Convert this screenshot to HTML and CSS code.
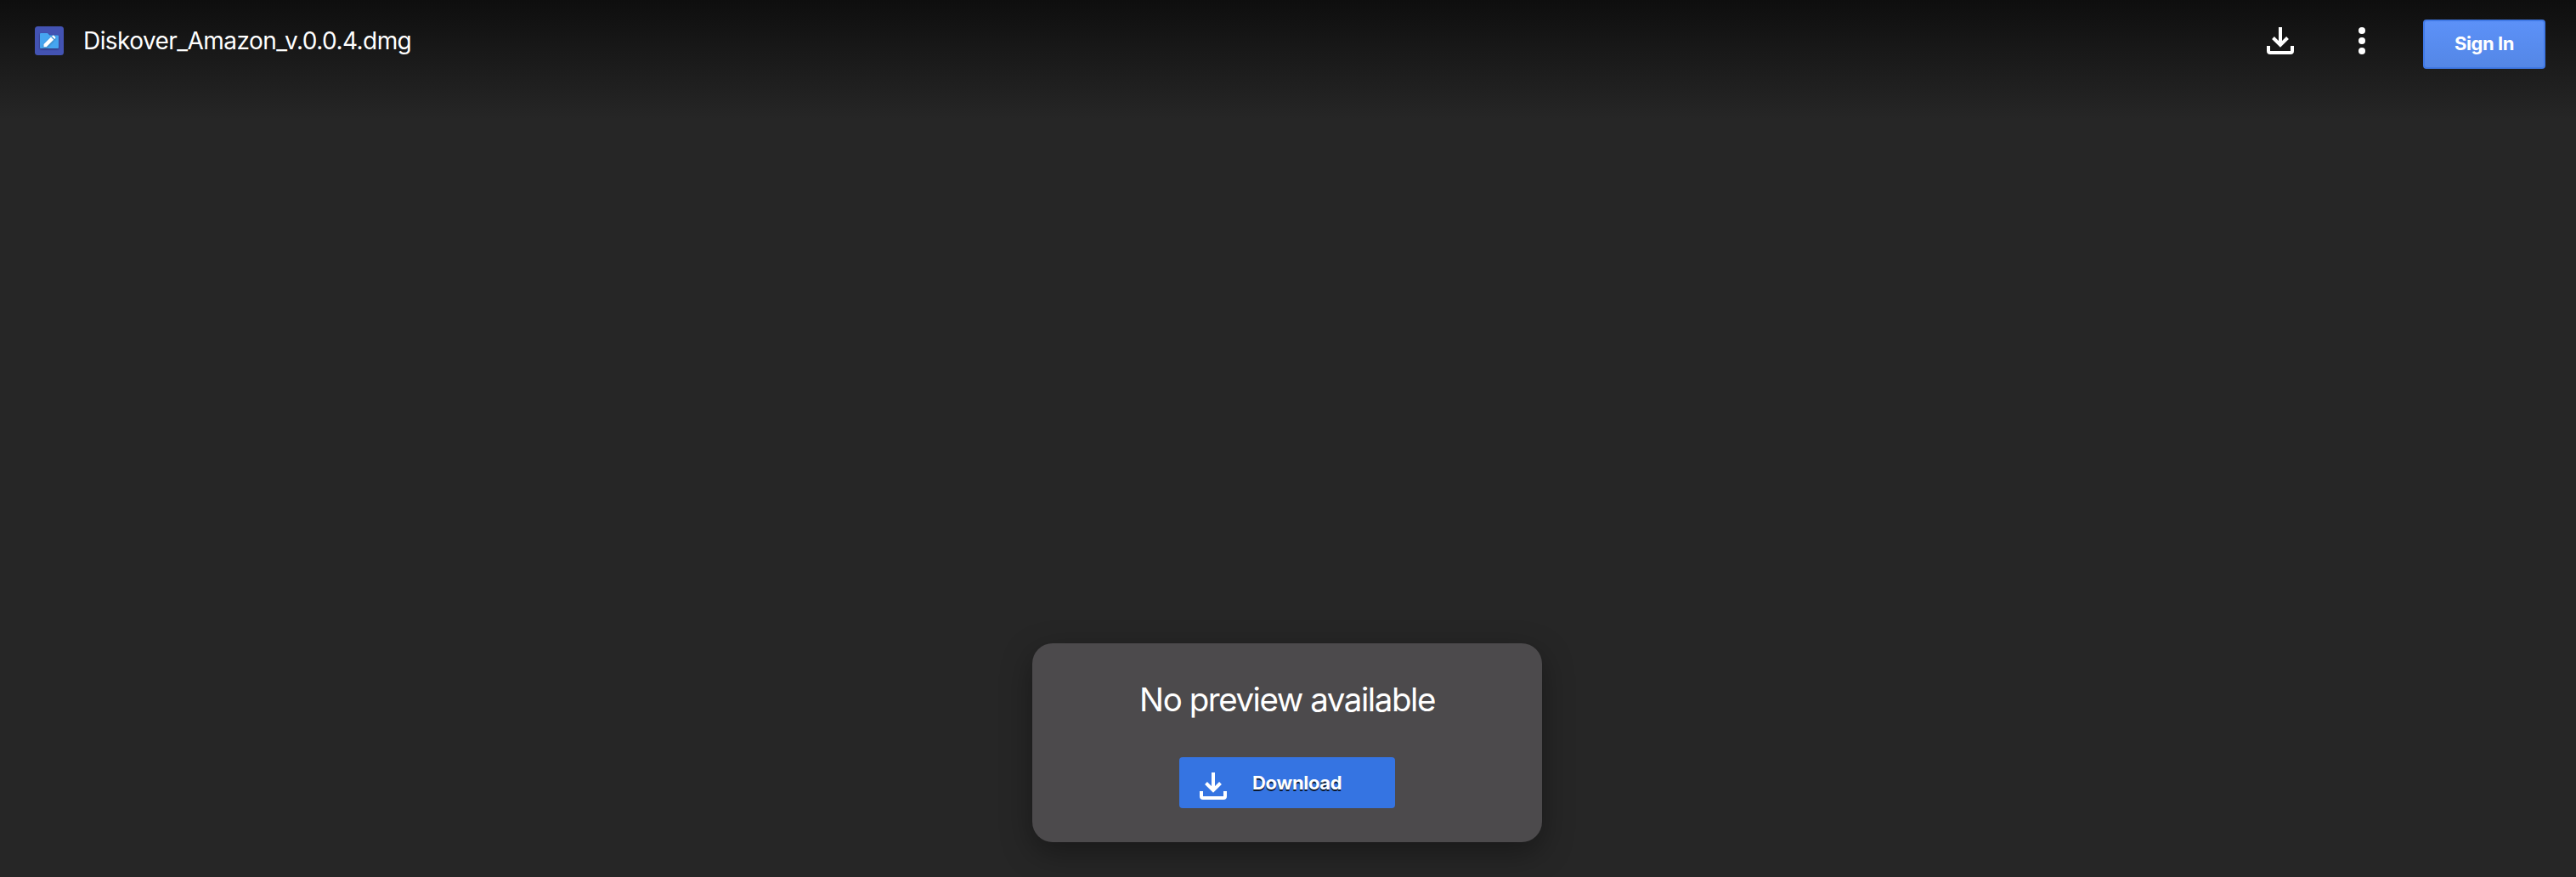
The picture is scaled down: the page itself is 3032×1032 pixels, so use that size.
FILE: index.html
```html
<!DOCTYPE html>
<html lang="en">
<head>
<meta charset="utf-8">
<title>Diskover_Amazon_v.0.0.4.dmg</title>
<link rel="stylesheet" href="styles.css">
</head>
<body>
<header class="toolbar">
  <svg class="file-icon" viewBox="0 0 34 34" aria-hidden="true">
    <rect width="34" height="34" rx="3.5" fill="#4353b3"/>
    <path class="folder-shadow" d="M7 8h8l2.500 2.500H27a1 1 0 0 1 1 1V25a1 1 0 0 1-1 1H7a1 1 0 0 1-1-1V9a1 1 0 0 1 1-1z" fill="#46a5f0"/>
    <path class="pencil-shadow" d="M10.500 24.300v-3.200l8.500-8.500 3.200 3.200-8.500 8.500zM20 11.800l.8-.8a1.300 1.300 0 0 1 1.800 0l1.400 1.400a1.300 1.300 0 0 1 0 1.800l-.8.8z" fill="#fff"/>
  </svg>
  <h1 class="file-name">Diskover_Amazon_v.0.0.4.dmg</h1>
  <button class="icon-button" aria-label="Download">
    <svg width="32" height="32" viewBox="0 0 32 32"><path d="M16 0v21M7.500 12.500l8.500 8.500 8.500-8.500M2 22v6a2 2 0 0 0 2 2h24a2 2 0 0 0 2-2v-6" fill="none" stroke="#fff" stroke-width="4"/></svg>
  </button>
  <button class="icon-button more" aria-label="More actions">
    <svg width="8" height="32" viewBox="0 0 8 32" fill="#fff"><circle cx="4" cy="4" r="4"/><circle cx="4" cy="16" r="4"/><circle cx="4" cy="28" r="4"/></svg>
  </button>
  <button class="sign-in"><span>Sign In</span></button>
</header>
<main class="viewer">
  <section class="card">
    <h2 class="message">No preview available</h2>
    <button class="download">
      <svg width="32" height="32" viewBox="0 0 32 32"><path d="M16 0v21M7.500 12.500l8.500 8.500 8.500-8.500M2 22v6a2 2 0 0 0 2 2h24a2 2 0 0 0 2-2v-6" fill="none" stroke="#fff" stroke-width="4"/></svg>
      <span class="download-label">Download</span>
    </button>
  </section>
</main>
</body>
</html>
```
FILE: styles.css
```css
* { box-sizing: border-box; }
body {
  margin: 0;
  height: 1032px;
  overflow: hidden;
  display: flex;
  flex-direction: column;
  background: linear-gradient(#0e0e0e, #262626 140px) #262626;
  color: #fff;
  font-family: Inter, "Liberation Sans", sans-serif;
}
button {
  margin: 0;
  padding: 0;
  border: 0;
  background: none;
  color: inherit;
  font: inherit;
}
svg { display: block; flex: none; }
.toolbar {
  display: flex;
  align-items: flex-start;
  height: 140px;
  padding: 23px 36px 0 41px;
}
.file-icon { width: 34px; height: 34px; margin-top: 8px; }
.folder-shadow { filter: drop-shadow(0 1px 1px rgba(0, 0, 0, .4)); }
.pencil-shadow { filter: drop-shadow(0 1px 1px rgba(0, 0, 0, .3)); }
.file-name {
  flex: 1;
  margin: 8px 0 0 23px;
  font-size: 28px;
  line-height: 34px;
  font-weight: 400;
  letter-spacing: -.56px;
  white-space: nowrap;
}
.icon-button { margin-top: 9px; }
.more { margin-left: 76px; }
.sign-in {
  width: 144px;
  height: 58px;
  margin-left: 68px;
  border: 2px solid #4079e6;
  border-radius: 4px;
  background: linear-gradient(#5c91f8, #5487e6);
  font-size: 22px;
  line-height: 52px;
  font-weight: 700;
  letter-spacing: -.4px;
}
.sign-in span { display: block; height: 54px; }
.viewer {
  flex: 1;
  display: flex;
  justify-content: center;
  align-items: flex-end;
  padding: 0 2px 41px 0;
}
.card {
  width: 600px;
  height: 234px;
  padding-top: 42px;
  display: flex;
  flex-direction: column;
  align-items: center;
  border-radius: 24px;
  background: #4c4a4c;
  box-shadow: 0 12px 36px rgba(0, 0, 0, .35);
}
.message {
  margin: 0 0 44px;
  font-size: 38.500px;
  line-height: 48px;
  font-weight: 400;
  letter-spacing: -1.45px;
  white-space: nowrap;
}
.download {
  width: 254px;
  height: 60px;
  display: flex;
  align-items: flex-start;
  padding: 18px 0 0 24px;
  border-radius: 4px;
  background: #3574e2;
}
.download-label {
  margin: -10px 0 0 30px;
  font-size: 22px;
  line-height: 44px;
  font-weight: 700;
  letter-spacing: -.3px;
  text-shadow: 0 2px 0 rgba(0, 0, 0, .8);
}
```
